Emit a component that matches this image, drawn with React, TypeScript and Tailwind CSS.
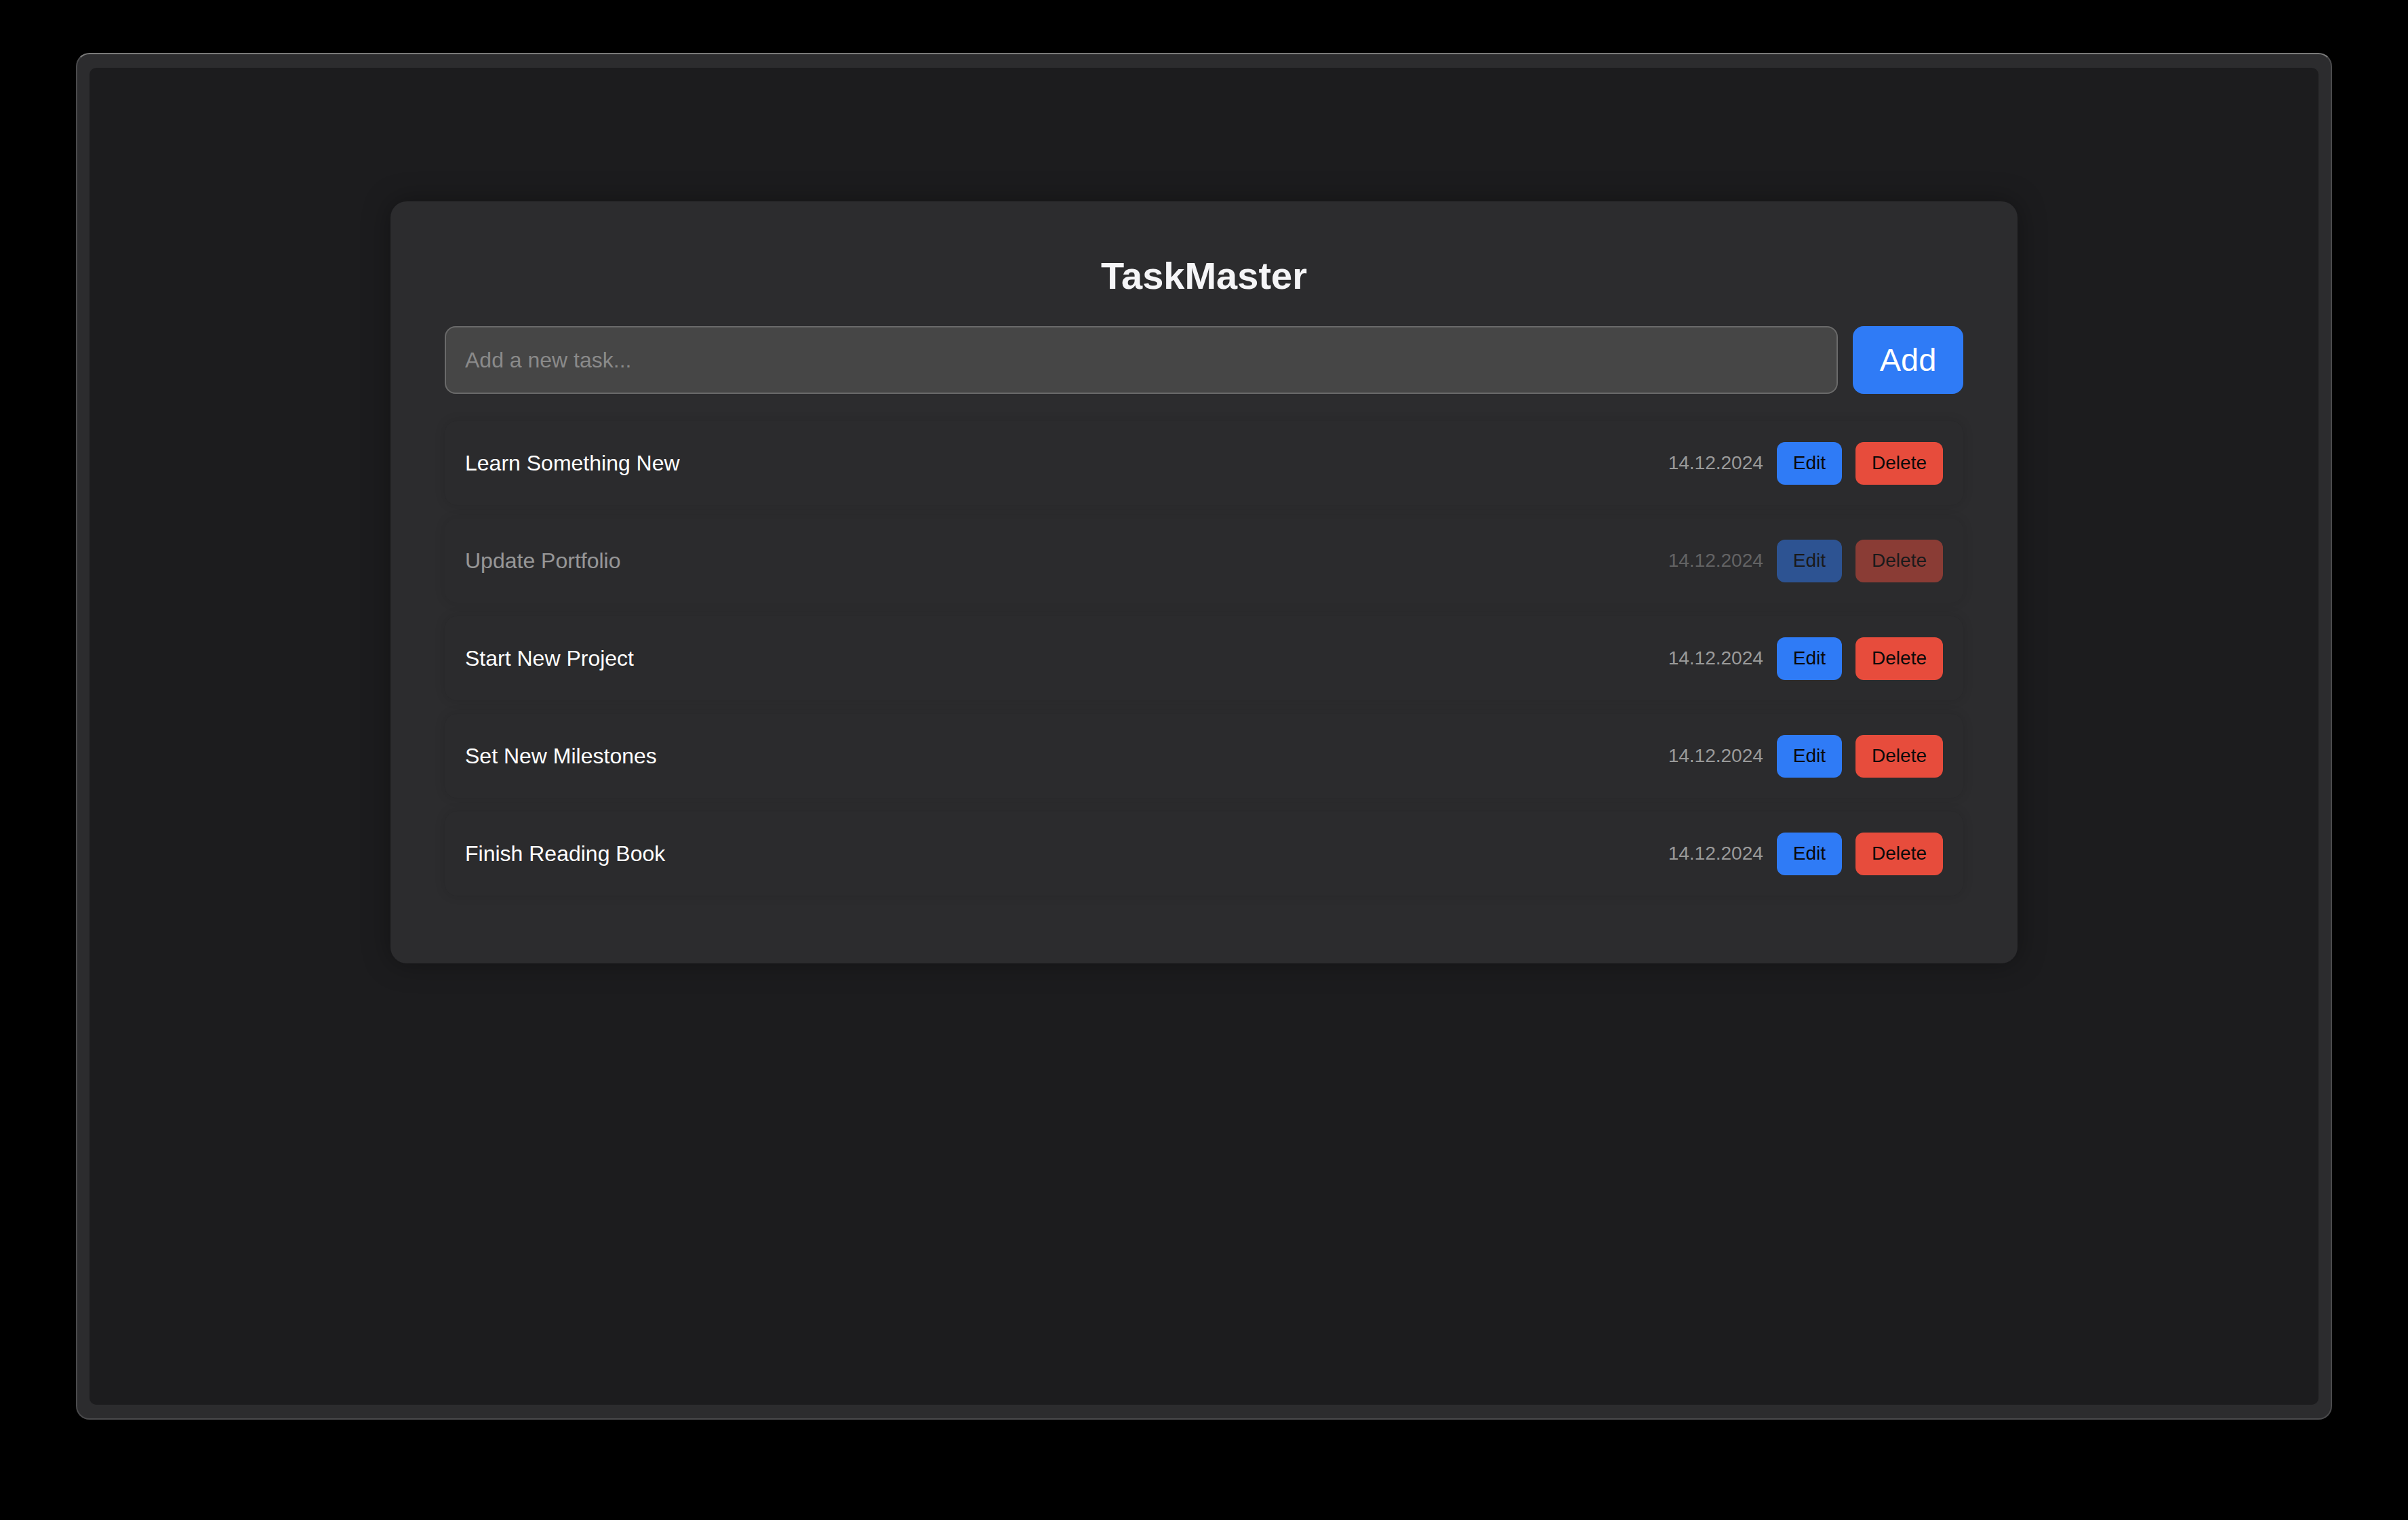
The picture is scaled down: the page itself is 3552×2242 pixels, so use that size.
import React from "react";

type Task = { title: string; date: string; done?: boolean };

const tasks: Task[] = [
  { title: "Learn Something New", date: "14.12.2024" },
  { title: "Update Portfolio", date: "14.12.2024", done: true },
  { title: "Start New Project", date: "14.12.2024" },
  { title: "Set New Milestones", date: "14.12.2024" },
  { title: "Finish Reading Book", date: "14.12.2024" },
];

export default function App() {
  return (
    <div
      className="h-[2242px] w-full bg-black px-[112px] pt-[78px] pb-[148px]"
      style={{ fontFamily: '"Liberation Sans", Arial, Helvetica, sans-serif' }}
    >
      <div className="h-full rounded-[20px] border-2 border-[#4a4a4c] border-t-[#7a7a7a] bg-[#2c2c2e] px-[18px] py-[20px]">
        <div className="h-full rounded-[10px] bg-[#1c1c1e] pt-[197px]">
          <div className="mx-auto w-[2400px] rounded-[24px] bg-[#2c2c2e] px-[80px] pt-[78px] pb-[80px] shadow-[0_0_40px_rgba(0,0,0,0.35)]">
            <h1 className="mb-[42px] text-center text-[56px] leading-[64px] font-bold text-[#f5f5f7]">
              TaskMaster
            </h1>
            <div className="mb-[40px] flex h-[100px] gap-[22px]">
              <input
                type="text"
                placeholder="Add a new task..."
                className="h-full flex-1 rounded-[16px] border-2 border-[#6a6a6a] bg-[#464646] px-[28px] text-[32px] text-white placeholder:text-[#8a8a8a] outline-none"
              />
              <button className="h-full w-[163px] rounded-[16px] bg-[#2f7bf6] text-[47px] text-white">
                Add
              </button>
            </div>
            <div className="flex flex-col">
              {tasks.map((t) => (
                <div
                  key={t.title}
                  className={
                    "mb-[20px] flex h-[124px] items-center justify-between rounded-[18px] bg-[#2b2b2d] px-[30px] shadow-[0_0_16px_rgba(0,0,0,0.12)] " +
                    (t.done ? "opacity-50" : "")
                  }
                >
                  <span className="text-[32px] text-white">{t.title}</span>
                  <div className="flex items-center gap-[20px]">
                    <span className="text-[28px] text-[#9a9a9a]">{t.date}</span>
                    <button className="h-[63px] rounded-[12px] bg-[#2f7bf6] px-[24px] text-[28px] text-[#0a0a0a]">
                      Edit
                    </button>
                    <button className="h-[63px] rounded-[12px] bg-[#e74c3c] px-[24px] text-[28px] text-[#0a0a0a]">
                      Delete
                    </button>
                  </div>
                </div>
              ))}
            </div>
          </div>
        </div>
      </div>
    </div>
  );
}
